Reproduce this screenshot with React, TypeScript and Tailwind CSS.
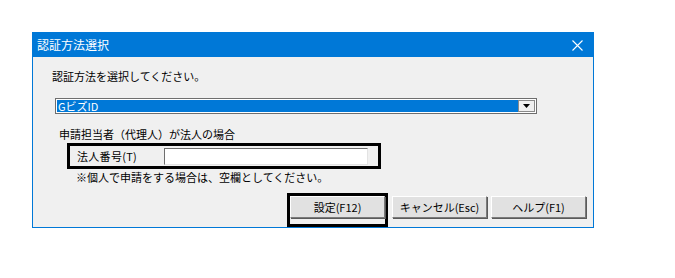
import React from "react";

const font = { fontFamily: '"Noto Sans CJK JP", "Noto Sans", sans-serif' };

function WinButton({ label }: { label: string }) {
  return (
    <button className="flex h-[22px] w-[95px] items-center justify-center border border-t-white border-l-white border-r-[#7a7a7a] border-b-[#7a7a7a] bg-[#e1e1e1] text-[11px] leading-[13px] text-black shadow-[1px_1px_0_#5a5a5a]">
      {label}
    </button>
  );
}

export default function App() {
  return (
    <div className="h-[278px] w-[675px] bg-white pl-[32px] pt-[32px]" style={font}>
      <div className="flex h-[196px] w-[562px] flex-col border border-[#0078d7] bg-[#f0f0f0]">
        {/* タイトルバー */}
        <div className="flex h-[24px] shrink-0 items-center justify-between bg-[#0078d7] pl-[4px] pr-[10px]">
          <span className="text-[12px] leading-[14px] text-white">認証方法選択</span>
          <svg width="11" height="11" viewBox="0 0 11 11">
            <path d="M0.5 0.5 L10.5 10.5 M10.5 0.5 L0.5 10.5" stroke="white" strokeWidth="1.1" fill="none" />
          </svg>
        </div>

        <div className="flex flex-col text-[11px] leading-[13px] text-black">
          <div className="ml-[19px] mt-[13px]">認証方法を選択してください。</div>

          {/* コンボボックス */}
          <div className="ml-[22px] mt-[15px] flex h-[16px] w-[482px] border border-[#6e6e6e] bg-white p-px">
            <div className="flex flex-1 items-center bg-[#0078d7] pl-[1px] text-[11px] leading-[12px] text-white">GビズID</div>
            <div className="flex w-[17px] items-center justify-center border border-[#8a8a8a] bg-[#f0f0f0]">
              <svg width="7" height="4" viewBox="0 0 7 4">
                <path d="M0 0 H7 L3.5 4 Z" fill="black" />
              </svg>
            </div>
          </div>

          <div className="ml-[26px] mt-[14px]">申請担当者（代理人）が法人の場合</div>

          {/* 法人番号 */}
          <div className="ml-[34px] mt-[2px] flex h-[26px] w-[314px] items-center border-[3px] border-black">
            <span className="ml-[7px] w-[87px] tracking-[0.3px]">法人番号(T)</span>
            <div className="h-[17px] w-[204px] border border-t-[#6e6e6e] border-l-[#6e6e6e] border-r-[#e3e3e3] border-b-[#e3e3e3] bg-white" />
          </div>

          <div className="ml-[43px] mt-[2px]">※個人で申請をする場合は、空欄としてください。</div>

          {/* ボタン */}
          <div className="mr-[7px] mt-[9px] flex items-start justify-end gap-[4px]">
            <div className="flex h-[34px] w-[101px] justify-center border-[3px] border-black">
              <WinButton label="設定(F12)" />
            </div>
            <div className="mt-[3px]">
              <WinButton label="キャンセル(Esc)" />
            </div>
            <div className="mt-[3px]">
              <WinButton label="ヘルプ(F1)" />
            </div>
          </div>
        </div>
      </div>
    </div>
  );
}
